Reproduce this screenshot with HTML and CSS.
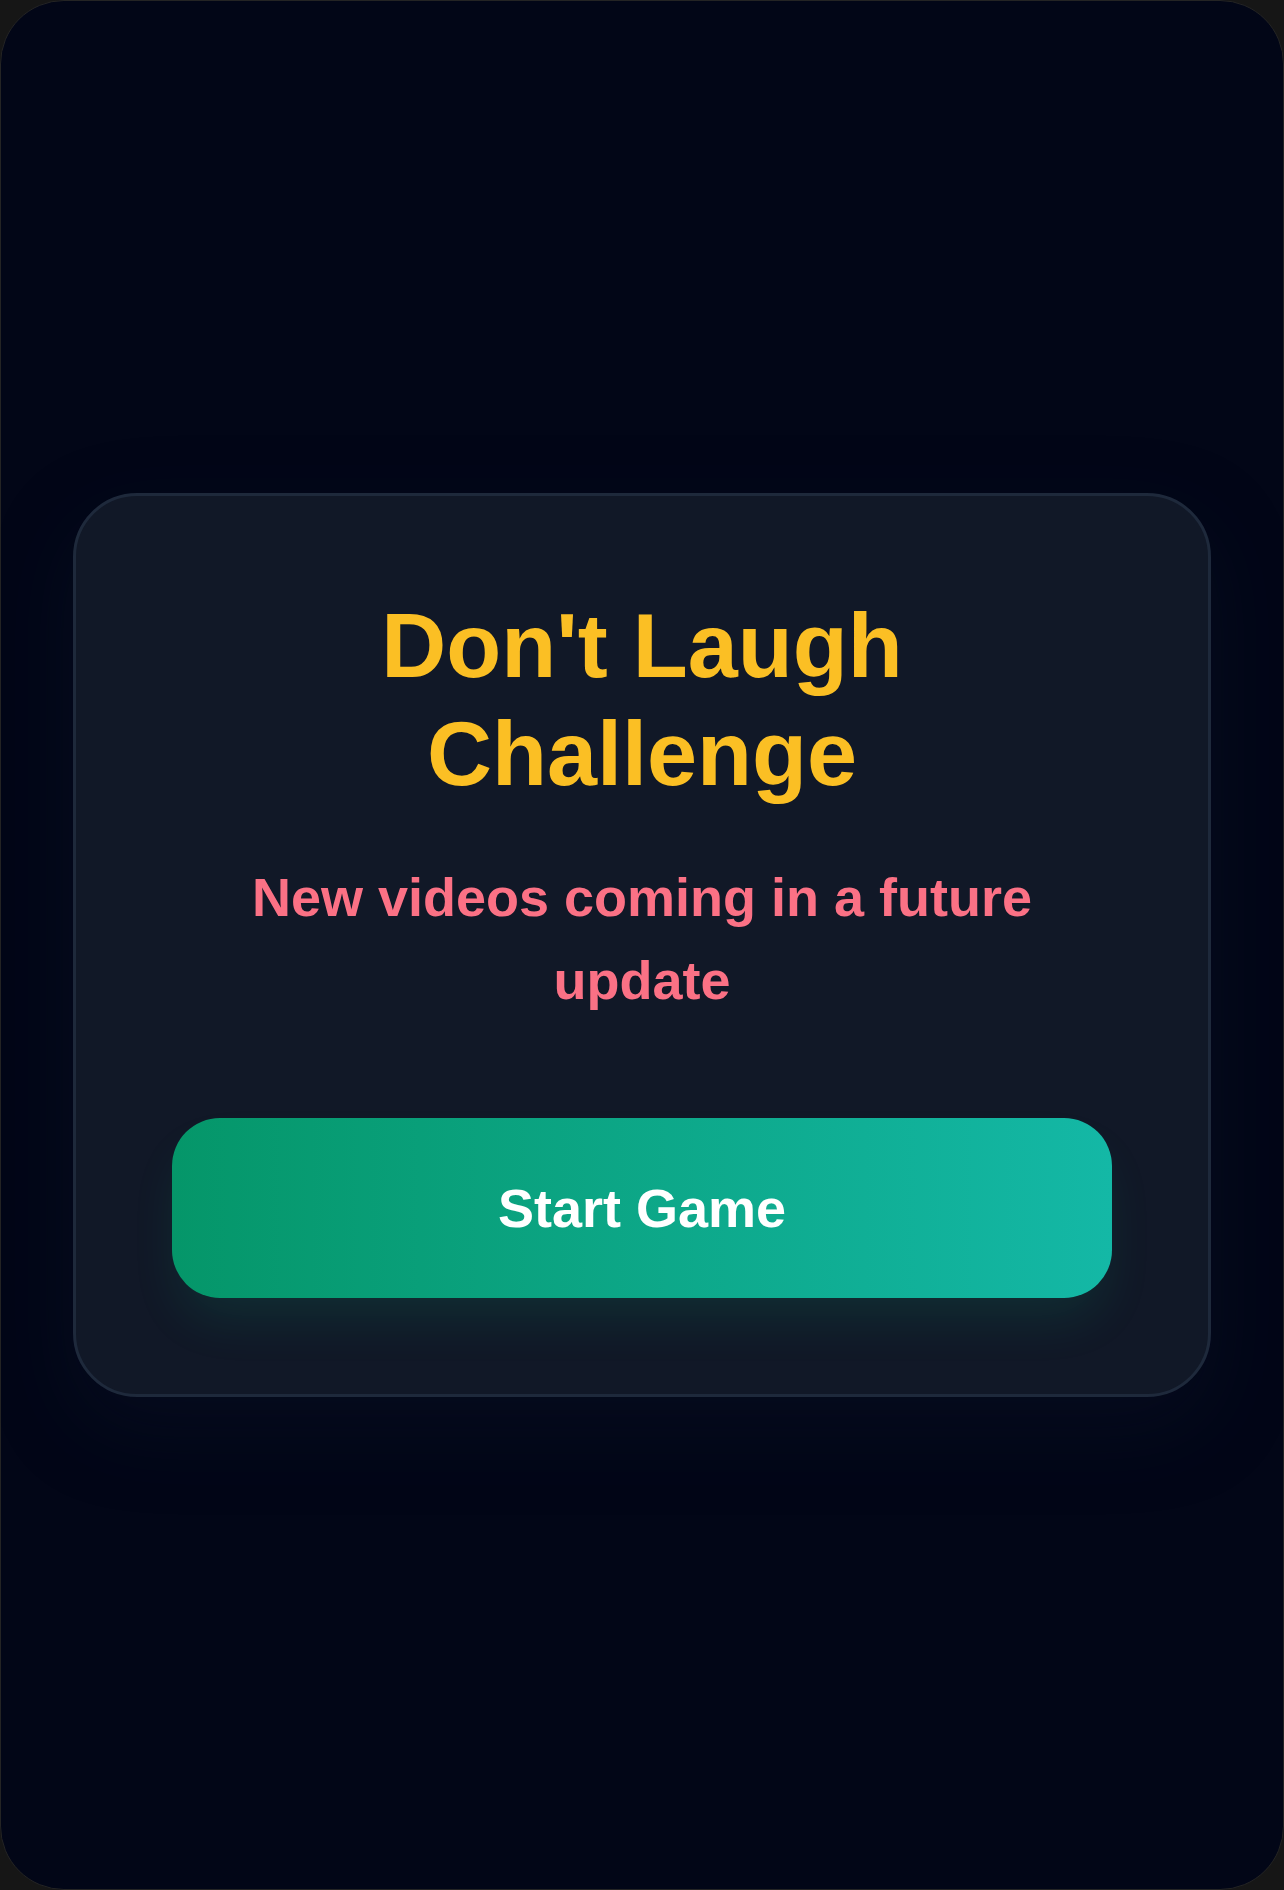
FILE: index.html
```html
<!DOCTYPE html>
<html lang="en">
<head>
  <meta charset="UTF-8">
  <meta name="viewport" content="width=device-width, initial-scale=1.0">
  <title>Don't Laugh Challenge</title>
  <link rel="stylesheet" href="styles.css">
</head>
<body>
  <div class="screen">
    <div class="card">
      <h1 class="title">Don't Laugh Challenge</h1>
      <p class="subtitle">New videos coming in a future update</p>
      <button class="start-btn">Start Game</button>
    </div>
  </div>
</body>
</html>
```

FILE: styles.css
```css
html, body {
  margin: 0;
  height: 100%;
}
body {
  background-color: #161616;
  font-family: 'Liberation Sans', Arial, Helvetica, sans-serif;
}
.screen {
  box-sizing: border-box;
  height: 100vh;
  background-color: #020617;
  border: 1px solid #242424;
  border-radius: 64px;
  display: flex;
  align-items: center;
  justify-content: center;
}
.card {
  box-sizing: border-box;
  width: 1138px;
  padding: 96px;
  background-color: #111827;
  border: 3px solid #1e293b;
  border-radius: 64px;
  text-align: center;
  box-shadow: 0 30px 80px rgba(15, 23, 42, 0.35);
}
.title {
  max-width: 700px;
  margin: 0 auto 48px auto;
  color: #fbbf24;
  font-size: 90px;
  line-height: 108px;
  font-weight: bold;
}
.subtitle {
  margin: 0 0 96px 0;
  color: #fb7185;
  font-size: 54px;
  line-height: 83px;
  font-weight: bold;
}
.start-btn {
  display: block;
  width: 100%;
  height: 180px;
  border: none;
  border-radius: 48px;
  background: linear-gradient(to right, #059669, #14b8a6);
  color: #ffffff;
  font-family: inherit;
  font-size: 54px;
  font-weight: bold;
  cursor: pointer;
  box-shadow: 0 28px 50px -10px rgba(16, 185, 129, 0.14);
}
```
